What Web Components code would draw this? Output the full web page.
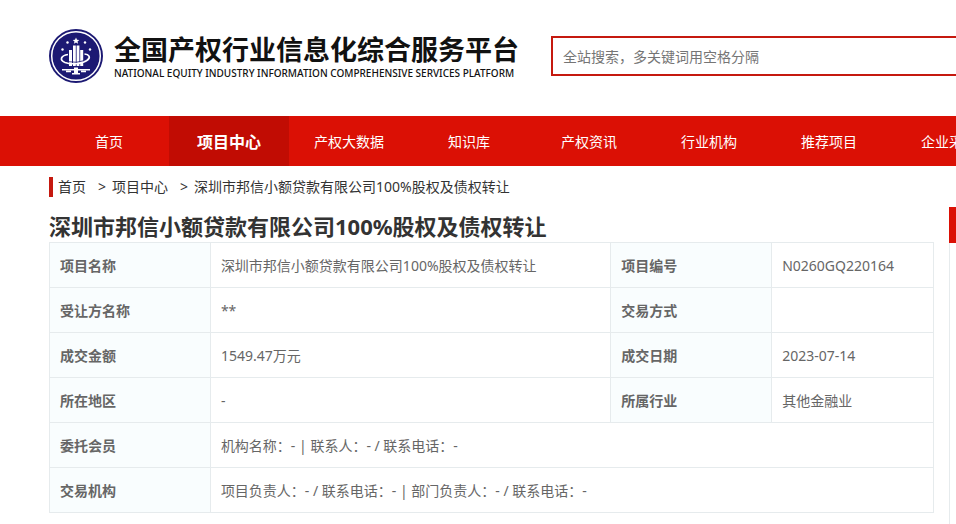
<!DOCTYPE html>
<html lang="zh-CN">
<head>
<meta charset="utf-8">
<meta name="viewport" content="width=device-width, initial-scale=1">
<title>全国产权行业信息化综合服务平台</title>
<style>
  :root { --red: #db1005; --dark-red: #c10c03; --line: #e6ebed; --gutter: 49px; }
  body { margin: 0; background: #fff; color: #333; font: 14px/20px "Noto Sans", "Noto Sans CJK SC", sans-serif; overflow-x: hidden; }
</style>
</head>
<body>
<portal-page></portal-page>
<script>
const define = (name, html, setup) => {
  const template = document.createElement('template');
  template.innerHTML = html;
  customElements.define(name, class extends HTMLElement {
    constructor() {
      super();
      this.attachShadow({ mode: 'open' }).append(template.content.cloneNode(true));
    }
    connectedCallback() { if (setup) setup(this, this.shadowRoot); }
  });
};

define('site-emblem', `
<style>:host{display:block;flex:none;width:54px;height:54px} svg{display:block;width:100%;height:100%}</style>
<svg viewBox="0 0 54 54" aria-hidden="true">
  <circle cx="27" cy="27" r="27" fill="#1c1973"/>
  <circle cx="27" cy="27" r="24.300" fill="none" stroke="#fff" stroke-width="1.500"/>
  <g fill="#fff">
    <path d="M27 8.500l1 2.200 2.300.2-1.800 1.500.6 2.400-2.100-1.300-2.100 1.300.6-2.400-1.800-1.500 2.300-.2z"/>
    <circle cx="18.500" cy="13.500" r="1.200"/><circle cx="36" cy="13.500" r="1.200"/>
    <circle cx="13.500" cy="20.500" r="1.200"/><circle cx="41" cy="20.500" r="1.200"/>
    <path d="M20 21h3v16h-3zM24 16.500h2.800v20.500H24zM27.600 16.500h2.800v20.500h-2.800zM31.200 21h3v16h-3z"/>
    <path d="M13 40h28v1.500H13z"/>
    <path d="M17 41.500h5v1.800h-5zM32 41.500h5v1.800h-5zM25 38.500h4v5.500h-4zM23 44h8v1.500h-8z"/>
  </g>
  <path d="M19 25.500C12 26.500 10 31 16 33.500C23 36 34 34.500 38.500 31C42 28 40 25.500 35.500 25" fill="none" stroke="#fff" stroke-width="1.700"/>
  <path d="M19.500 32.700q8 1.600 15.500-1" fill="none" stroke="#1c1973" stroke-width=".8"/>
</svg>`);

define('site-brand', `
<style>
  :host{display:block;flex:none}
  a{display:flex;align-items:center;gap:11px;color:#111;text-decoration:none;white-space:nowrap}
  span{display:block}
  .name{font-size:27px;line-height:34px;font-weight:700}
  .sub{font-size:10px;line-height:12px;font-weight:500}
</style>
<a href="#"><site-emblem></site-emblem><span><span class="name"><slot name="name"></slot></span><span class="sub"><slot name="sub"></slot></span></span></a>`);

define('site-search', `
<style>
  :host{display:block;flex:1 0 480px}
  input{display:block;box-sizing:border-box;width:100%;height:40px;margin:0;padding:0 10px;border:2px solid #c5190f;border-radius:0;background:#fff;font:inherit;color:#333;outline:0}
  input::placeholder{color:#757575;opacity:1}
</style>
<input type="search" aria-label="全站搜索" placeholder="全站搜索，多关键词用空格分隔">`);

define('site-header', `
<style>
  :host{display:flex;align-items:center;gap:32px;box-sizing:border-box;padding:29px 0 33px var(--gutter);overflow:hidden}
</style>
<site-brand><span slot="name">全国产权行业信息化综合服务平台</span><span slot="sub">NATIONAL EQUITY INDUSTRY INFORMATION COMPREHENSIVE SERVICES PLATFORM</span></site-brand>
<site-search></site-search>`);

define('nav-item', `
<style>
  :host{display:block;flex:0 0 120px}
  a{display:block;padding-top:2px;line-height:48px;text-align:center;color:#fff;text-decoration:none;white-space:nowrap}
  :host([active]) a{background:var(--dark-red);font-size:16px;font-weight:700}
</style>
<a href="#"><slot></slot></a>`, (host, root) => {
  if (host.hasAttribute('active')) root.querySelector('a').setAttribute('aria-current', 'page');
});

define('site-nav', `
<style>:host{display:block;background:var(--red);overflow:hidden} nav{display:flex;padding-left:var(--gutter)}</style>
<nav><slot></slot></nav>`);

define('bread-crumb', `
<style>
  :host{display:block}
  nav{display:flex;gap:6px;line-height:20px;border-left:4px solid #c5190f;padding-left:5px;white-space:nowrap}
  a{color:inherit;text-decoration:none}
  .sep{margin-left:6px}
</style>
<nav aria-label="面包屑"><a href="#">首页</a><span class="sep">&gt;</span><a href="#">项目中心</a><span class="sep">&gt;</span><span><slot></slot></span></nav>`);

define('deal-table', `
<style>
  :host{display:block}
  table{width:100%;table-layout:fixed;border-collapse:collapse;color:#666}
  .label{width:18.200%} .wide{width:45.300%}
  th,td{box-sizing:border-box;height:45px;padding:2px 10px 0;border:1px solid var(--line);text-align:left;line-height:20px}
  th{background:#f9fdfe;font-weight:700}
</style>
<table>
  <colgroup><col class="label"><col class="wide"><col class="label"><col></colgroup>
  <tbody>
    <tr><th scope="row">项目名称</th><td>深圳市邦信小额贷款有限公司100%股权及债权转让</td><th scope="row">项目编号</th><td>N0260GQ220164</td></tr>
    <tr><th scope="row">受让方名称</th><td>**</td><th scope="row">交易方式</th><td></td></tr>
    <tr><th scope="row">成交金额</th><td>1549.47万元</td><th scope="row">成交日期</th><td>2023-07-14</td></tr>
    <tr><th scope="row">所在地区</th><td>-</td><th scope="row">所属行业</th><td>其他金融业</td></tr>
    <tr><th scope="row">委托会员</th><td colspan="3">机构名称：- | 联系人：- / 联系电话：-</td></tr>
    <tr><th scope="row">交易机构</th><td colspan="3">项目负责人：- / 联系电话：- | 部门负责人：- / 联系电话：-</td></tr>
  </tbody>
</table>`);

define('side-panel', `
<style>
  :host{display:flex;flex-direction:column;flex:none;width:300px;margin-right:-293px}
  .head{height:36px;background:var(--red)}
  .body{flex:1;border-left:1px solid var(--line)}
</style>
<div class="head"></div><div class="body"></div>`);

define('portal-page', `
<style>
  :host{display:flex;flex-direction:column;min-height:100vh;overflow:hidden}
  bread-crumb{margin:11px 0 10px var(--gutter)}
  .content{display:flex;flex:1;gap:15px;padding-left:var(--gutter)}
  main{flex:1;min-width:0}
  h1{margin:3px 0 0;font-size:22px;line-height:32px;font-weight:700;color:#333}
</style>
<site-header></site-header>
<site-nav>
  <nav-item>首页</nav-item><nav-item active>项目中心</nav-item><nav-item>产权大数据</nav-item><nav-item>知识库</nav-item>
  <nav-item>产权资讯</nav-item><nav-item>行业机构</nav-item><nav-item>推荐项目</nav-item><nav-item>企业采购</nav-item>
</site-nav>
<bread-crumb>深圳市邦信小额贷款有限公司100%股权及债权转让</bread-crumb>
<div class="content">
  <main><h1>深圳市邦信小额贷款有限公司100%股权及债权转让</h1><deal-table></deal-table></main>
  <side-panel></side-panel>
</div>`);
</script>
</body>
</html>
